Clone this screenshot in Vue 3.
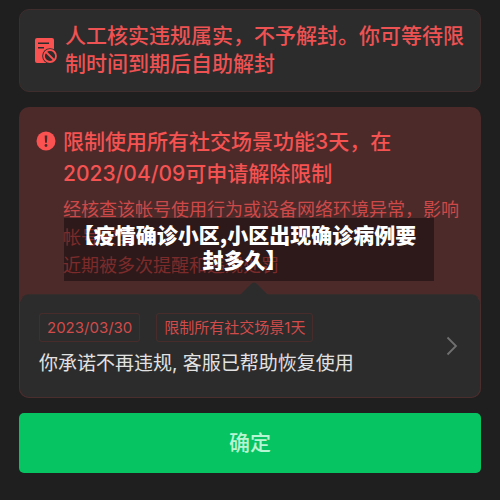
<script setup>
const record = {
  date: '2023/03/30',
  penalty: '限制所有社交场景1天',
  message: '你承诺不再违规, 客服已帮助恢复使用',
}
</script>

<template>
  <main class="page">
    <section class="notice">
      <svg class="notice-icon" viewBox="0 0 24 27" aria-hidden="true">
        <path class="fill" d="M3 1h15a2 2 0 0 1 2 2v21a2 2 0 0 1-2 2H3a2 2 0 0 1-2-2V3a2 2 0 0 1 2-2z" />
        <path class="dark-line" d="M4 6.300h11M4 10.800h6" />
        <circle class="halo" cx="16" cy="19" r="7.800" />
        <circle class="ring" cx="16" cy="19" r="6" />
        <path class="ring" d="M12 15l8 8" />
      </svg>
      <p class="notice-text">人工核实违规属实，不予解封。你可等待限制时间到期后自助解封</p>
    </section>

    <section class="penalty">
      <div class="penalty-body">
        <svg class="alert-icon" viewBox="0 0 20 20" aria-hidden="true">
          <circle class="fill" cx="10" cy="10" r="9.500" />
          <path class="mark" d="M8.700 4.500h2.600l-.4 7.200H9.100z" />
          <circle class="mark" cx="10" cy="14.500" r="1.400" />
        </svg>
        <div class="penalty-copy">
          <h1 class="penalty-title">限制使用所有社交场景功能3天，在<br />2023/04/09可申请解除限制</h1>
          <p class="penalty-text">
            经核查该帐号使用行为或设备网络环境异常，影响<br />帐号安全<br />近期被多次提醒和违规处罚
          </p>
        </div>
        <p class="caption">【疫情确诊小区,小区出现确诊病例要<br />封多久】</p>
      </div>

      <a class="record" href="#record">
        <svg class="pointer" viewBox="0 0 28 13" aria-hidden="true">
          <path d="M0 13L11 2q3-3 6 0l11 11z" />
        </svg>
        <span class="record-main">
          <span class="tags">
            <span class="tag">{{ record.date }}</span>
            <span class="tag">{{ record.penalty }}</span>
          </span>
          <span class="message">{{ record.message }}</span>
        </span>
        <svg class="chevron" viewBox="0 0 12 20" aria-hidden="true">
          <path d="M1.500 1.500L10 10l-8.500 8.500" />
        </svg>
      </a>
    </section>

    <button class="confirm" type="button">确定</button>
  </main>
</template>

<style>
body {
  margin: 0;
  background: #1f1f1f;
}
</style>

<style scoped>
.page {
  box-sizing: border-box;
  min-height: 100vh;
  padding: 9px 19px 26px;
  background: #1f1f1f;
  font-family: Inter, "Noto Sans CJK SC", sans-serif;
}

p,
h1 {
  margin: 0;
}

.notice {
  display: flex;
  align-items: center;
  gap: 7px;
  padding: 12px 16px 13px 14px;
  border: 1px solid #3f2d2d;
  border-radius: 10px;
  background: #2c2c2c;
}

.notice-icon {
  flex: none;
  width: 24px;
  height: 27px;
}

.fill {
  fill: #fa5151;
}

.dark-line {
  fill: none;
  stroke: #2c2c2c;
  stroke-width: 1.6;
}

.halo {
  fill: #2c2c2c;
}

.notice-icon .ring {
  fill: none;
  stroke: #fa5151;
  stroke-width: 1.8;
}

.notice-text {
  flex: 1;
  color: #ee5253;
  font-size: 21px;
  font-weight: 500;
  line-height: 28px;
}

.penalty {
  margin-top: 15px;
  border-radius: 10px;
  background: #4c2a2a;
}

.penalty-body {
  position: relative;
  display: flex;
  gap: 7px;
  padding: 19px 16px 14px 17px;
}

.alert-icon {
  flex: none;
  width: 20px;
  height: 20px;
  margin-top: 5px;
}

.mark {
  fill: #4c2a2a;
}

.penalty-title {
  color: #f55252;
  font-size: 21px;
  font-weight: 500;
  line-height: 32px;
}

.penalty-text {
  margin-top: 6px;
  color: #cd4949;
  font-size: 18px;
  line-height: 28px;
  white-space: nowrap;
}

.caption {
  position: absolute;
  right: 47px;
  bottom: 13px;
  left: 45px;
  padding: 4px 9px 9px 0;
  background: rgba(0, 0, 0, 0.4);
  color: #fff;
  font-family: "Noto Sans CJK SC", sans-serif;
  font-size: 21px;
  font-weight: 900;
  line-height: 25px;
  text-align: center;
  white-space: nowrap;
}

.record {
  position: relative;
  display: flex;
  align-items: center;
  justify-content: space-between;
  padding: 18px 22px 19px 19px;
  border: 1px solid #4a2d2d;
  border-top-color: #352c2c;
  border-radius: 10px;
  background: #2c2c2c;
  text-decoration: none;
}

.pointer {
  position: absolute;
  bottom: 100%;
  left: 220px;
  width: 28px;
  height: 13px;
  fill: #2c2c2c;
}

.record-main {
  display: flex;
  flex-direction: column;
  gap: 8px;
}

.tags {
  display: flex;
  gap: 16px;
}

.tag {
  padding: 0 7px;
  border: 1px solid #482c2c;
  border-radius: 3px;
  color: #d14b4b;
  font-size: 15px;
  line-height: 27px;
}

.message {
  color: #e2e2e2;
  font-size: 19px;
  line-height: 28px;
}

.chevron {
  width: 12px;
  height: 20px;
  fill: none;
  stroke: #707070;
  stroke-width: 1.8;
}

.confirm {
  display: block;
  width: 100%;
  margin-top: 15px;
  padding: 16px;
  border: 0;
  border-radius: 5px;
  background: #07c462;
  color: #b8f5d2;
  font-family: inherit;
  font-size: 21px;
  font-weight: 500;
  line-height: 28px;
}
</style>
